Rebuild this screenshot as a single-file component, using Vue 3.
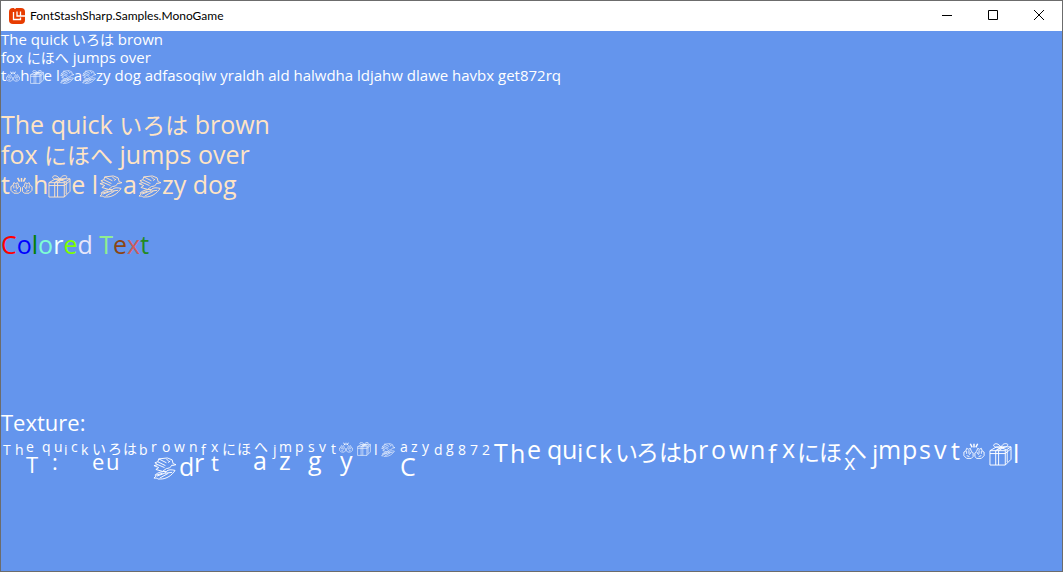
<script setup>
const small = [
  [{ t: 'The quick ' }, { k: 'いろは' }, { t: ' brown' }],
  [{ t: 'fox ' }, { k: 'にほへ' }, { t: ' jumps over' }],
  [
    { t: 't' }, { i: 'hands' }, { t: 'h' }, { i: 'gift' }, { t: 'e l' }, { i: 'bird' }, { t: 'a' }, { i: 'bird' },
    { t: 'zy dog adfasoqiw yraldh ald halwdha ldjahw dlawe havbx get872rq' },
  ],
]
const large = [
  small[0],
  small[1],
  [...small[2].slice(0, 8), { t: 'zy dog' }],
]
const blocks = [
  { name: 'small', lines: small },
  { name: 'large', lines: large },
]

const colored = [
  ['C', 'red'], ['o', 'blue'], ['l', 'green'], ['o', 'aquamarine'], ['r', 'azure'], ['e', 'chartreuse'],
  ['d', 'lavender'], [' ', 'white'], ['T', 'lightgreen'], ['e', 'saddlebrown'], ['x', 'indianred'], ['t', 'forestgreen'],
]

// Glyph atlas: [character, x, baseline] in atlas coordinates
const atlas = [
  {
    name: 'a-small',
    glyphs: [
      ['T', 2, 20], ['h', 14, 20], ['e', 25, 17], ['q', 41, 17], ['u', 53, 17], ['i', 63, 20], ['c', 70, 17], ['k', 80, 20],
      ['b', 138, 20], ['r', 150, 17], ['o', 161, 17], ['w', 173, 17], ['n', 188, 17], ['f', 200, 20], ['x', 210, 17],
      ['j', 272, 20], ['m', 278, 17], ['p', 294, 17], ['s', 307, 17], ['v', 318, 17], ['t', 330, 19], ['l', 373, 20],
      ['a', 399, 17], ['z', 410, 17], ['y', 421, 17], ['d', 433, 20], ['g', 445, 17], ['8', 457, 20], ['7', 469, 20], ['2', 481, 20],
    ],
  },
  {
    name: 'a-small kana',
    glyphs: [['い', 91, 19], ['ろ', 107, 19], ['は', 122, 19], ['に', 221, 19], ['ほ', 236, 19], ['へ', 253, 17]],
  },
  {
    name: 'a-mid',
    glyphs: [['T', 25, 38], [':', 51, 35], ['e', 91, 35], ['u', 105, 35], ['t', 210, 36], ['x', 843, 35]],
  },
  {
    name: 'a-large',
    glyphs: [
      ['T', 493, 27], ['h', 509, 28], ['e', 526, 24], ['q', 546, 24], ['u', 561, 24], ['i', 576, 27], ['c', 584, 24], ['k', 598, 28],
      ['b', 681, 28], ['r', 697, 24], ['o', 710, 24], ['w', 728, 24], ['n', 749, 24], ['f', 767, 28], ['x', 781, 23],
      ['j', 871, 28], ['m', 877, 24], ['p', 901, 24], ['s', 918, 24], ['v', 933, 24], ['t', 950, 25], ['l', 1012, 28],
      ['d', 178, 41], ['r', 193, 37], ['a', 252, 35], ['z', 278, 35], ['g', 307, 35], ['y', 339, 35], ['C', 399, 41],
    ],
  },
  {
    name: 'a-large kana',
    glyphs: [['い', 614, 26], ['ろ', 635, 26], ['は', 658, 26], ['に', 796, 26], ['ほ', 818, 26], ['へ', 843, 24]],
  },
]
const atlasIcons = [
  ['hands', 338, 6, 14], ['gift', 356, 7, 14], ['bird', 380, 8, 14],
  ['bird', 152, 22, 23], ['hands', 962, 6, 22], ['gift', 988, 8, 23],
]
</script>

<template>
  <div class="window">
    <svg class="defs" aria-hidden="true">
      <symbol id="hands" viewBox="0 0 24 24">
        <path d="M12 3v4M8 3l2 4M16 3l-2 4" stroke-width="1.6" />
        <path d="M9 19H4l-3-3v-4l2-1 1-3 2 1 2-1 1 3 2 2v4zM4 11v3M6.500 10v4M9 12l-2 3M4 16l3 1" />
        <path d="M15 19h5l3-3v-4l-2-1-1-3-2 1-2-1-1 3-2 2v4zM20 11v3M17.500 10v4M15 12l2 3M20 16l-3 1" />
      </symbol>
      <symbol id="gift" viewBox="0 0 24 24">
        <path d="M1 8h16v15H1zM1 8l7-4h15l-6 4M23 4v13l-6 6M1 11h16l6-5M7 8v15M10 8v15M19 7v13M7 8l5-3M10 8l6-4" />
        <path d="M13 5C8 5 4 4 5 2s5-2 8 3c0-4 4-5 6-4s-1 4-6 4l-5 2M13 5l5 2" />
      </symbol>
      <symbol id="bird" viewBox="0 0 24 24">
        <path d="M6 2l9-1 5 2 1 4 3 1-4 1M6 2L5 5 2 6l3 2-4 1 5 2-3 2 7 2M6 2l8 4M5 5l8 4M5 8l7 3M14 2l3 3M18 4l-2 2M20 8c-1 3-4 4-6 4M14 12l-4 3" />
        <path d="M23 14c-4-1-7-1-9 1-5 0-9 1-12 4l1 1-2 2 3 0 1 1 3 0c6 0 12-4 15-9zM14 15l-2 2 8-1M4 20l8-3M7 22l9-5M3 19l7-2" />
      </symbol>
    </svg>

    <header class="titlebar">
      <svg class="logo" viewBox="0 0 16 16" aria-hidden="true">
        <rect width="16" height="16" rx="4" />
        <path d="M4.500 4v7.500h7v-2M8 3.500V8h8M11.500 3.500V8M6 0v1" />
      </svg>
      <h1>FontStashSharp.Samples.MonoGame</h1>
      <div class="controls">
        <button type="button" aria-label="Minimize">
          <svg viewBox="0 0 10 10"><path d="M0 5.500h10" /></svg>
        </button>
        <button type="button" aria-label="Maximize">
          <svg viewBox="0 0 10 10"><path d="M.5.5h9v9h-9z" /></svg>
        </button>
        <button type="button" aria-label="Close">
          <svg viewBox="0 0 10 10"><path d="M0 0l10 10M10 0L0 10" /></svg>
        </button>
      </div>
    </header>

    <main class="client">
      <section v-for="b in blocks" :key="b.name" :class="b.name">
        <p v-for="(line, n) in b.lines" :key="n"><template v-for="(r, j) in line" :key="j"><svg v-if="r.i" class="glyph" :class="r.i"><use :href="'#' + r.i" /></svg><span v-else-if="r.k" class="kana">{{ r.k }}</span><span v-else>{{ r.t }}</span></template></p>
      </section>
      <p class="colored"><span v-for="(c, n) in colored" :key="n" :style="{ color: c[1] }">{{ c[0] }}</span></p>
      <h2>Texture:</h2>
      <svg class="atlas">
        <g v-for="g in atlas" :key="g.name" :class="g.name">
          <text v-for="(c, n) in g.glyphs" :key="n" :x="c[1]" :y="c[2]">{{ c[0] }}</text>
        </g>
        <use v-for="(c, n) in atlasIcons" :key="n" class="stroke" :href="'#' + c[0]" :x="c[1]" :y="c[2]" :width="c[3]" :height="c[3]" />
      </svg>
    </main>
  </div>
</template>

<style>
body {
  margin: 0;
}
</style>

<style scoped>
.window {
  box-sizing: border-box;
  min-height: 100vh;
  display: flex;
  flex-direction: column;
  border: 1px solid #6c6c6c;
  background: cornflowerblue;
  font-family: "Open Sans", "Noto Sans", "Noto Sans CJK JP", sans-serif;
}
.defs {
  position: absolute;
  width: 0;
  height: 0;
}
.titlebar {
  height: 30px;
  flex: none;
  display: flex;
  align-items: center;
  background: #fff;
  color: #000;
}
.logo {
  width: 16px;
  height: 16px;
  margin: 0 5px 0 8px;
  fill: #e73c00;
}
.logo path {
  fill: none;
  stroke: #fff;
  stroke-width: 1.3;
}
h1 {
  margin: 0;
  flex: 1;
  font: 400 12px/16px Lato, sans-serif;
}
.controls {
  display: flex;
}
.controls button {
  width: 46px;
  height: 30px;
  padding: 0 0 2px;
  border: 0;
  background: none;
  display: grid;
  place-items: center;
}
.controls svg {
  width: 10px;
  height: 10px;
  fill: none;
  stroke: #000;
}
.client {
  flex: 1;
  color: #fff;
}
p,
h2 {
  margin: 0;
  white-space: pre;
  font-weight: 400;
}
.small {
  font-size: 15px;
  line-height: 16px;
}
.small p {
  height: 18px;
}
.large,
.colored {
  font-size: 25px;
  line-height: 30px;
}
.large {
  margin-top: 24px;
  color: bisque;
}
.large p {
  height: 30px;
}
.colored {
  margin-top: 30px;
}
.kana {
  font-family: "Noto Sans CJK JP", sans-serif;
  line-height: 1px;
}
.small .kana {
  font-size: 14px;
}
.large .kana {
  font-size: 23px;
}
.glyph,
.stroke {
  fill: none;
  stroke: currentColor;
  stroke-width: 1;
}
.small .glyph {
  width: 14px;
  height: 14px;
  vertical-align: -3px;
}
.large .glyph {
  width: 23px;
  height: 23px;
  vertical-align: -4px;
}
.large .bird {
  margin: 0 1px;
}
h2 {
  margin-top: 150px;
  font-size: 22px;
  line-height: 26px;
}
.atlas {
  display: block;
  width: 100%;
  height: 60px;
  fill: #fff;
  overflow: visible;
}
.a-small {
  font-size: 14px;
}
.a-mid {
  font-size: 22px;
}
.a-large {
  font-size: 25px;
}
.atlas .kana {
  font-family: "Noto Sans CJK JP", sans-serif;
}
.a-large.kana {
  font-size: 23px;
}
</style>
